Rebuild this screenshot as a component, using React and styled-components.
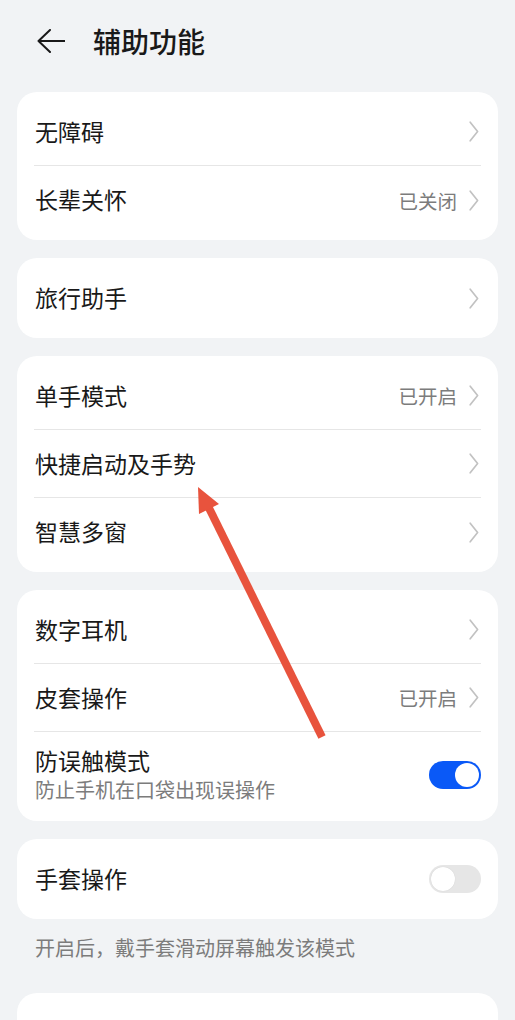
import React from "react";
import styled, { createGlobalStyle } from "styled-components";

const GlobalStyle = createGlobalStyle`
  * { box-sizing: border-box; }
  body {
    margin: 0;
    background: #f1f3f5;
    font-family: "Noto Sans CJK SC", "Noto Sans", sans-serif;
    color: #191919;
  }
`;

const Page = styled.div`
  position: relative;
  width: 515px;
  min-height: 1020px;
  overflow: hidden;
`;

const Header = styled.header`
  height: 82px;
  display: flex;
  align-items: center;
  gap: 28px;
  padding-left: 37px;
`;

const Title = styled.h1`
  margin: 0;
  font-size: 28px;
  font-weight: 500;
  line-height: 1;
  color: #191919;
`;

const List = styled.main`
  padding: 10px 17px 0;
  display: flex;
  flex-direction: column;
  gap: 18px;
`;

const Group = styled.div`
  display: flex;
  flex-direction: column;
`;

const Card = styled.section`
  background: #fff;
  border-radius: 20px;
  padding: 6px 17px;
  min-height: ${(p) => (p.$tall ? "80px" : "auto")};
`;

const Row = styled.div`
  min-height: ${(p) => (p.$double ? "83px" : "68px")};
  padding: ${(p) => (p.$double ? "13px 0 10px" : "0")};
  display: flex;
  align-items: center;
  justify-content: space-between;
  border-bottom: 1px solid #e6e6e6;
  &:last-child { border-bottom: none; }
`;

const Texts = styled.div`
  display: flex;
  flex-direction: column;
`;

const Label = styled.span`
  font-size: 23px;
  line-height: 32px;
  padding-left: 1px;
  margin-top: -2px;
`;

const Sub = styled.span`
  font-size: 20px;
  line-height: 28px;
  color: #7c7c7c;
  padding-left: 1px;
`;

const Right = styled.div`
  display: flex;
  align-items: center;
  gap: 12px;
  padding-right: 2px;
`;

const Value = styled.span`
  font-size: 19.5px;
  color: #7c7c7c;
`;

const Switch = styled.div`
  width: 52px;
  height: 28px;
  border-radius: 14px;
  padding: 2px;
  background: ${(p) => (p.$on ? "#0a59f7" : "#e6e6e6")};
  display: flex;
  justify-content: ${(p) => (p.$on ? "flex-end" : "flex-start")};
  &::after {
    content: "";
    width: 24px;
    height: 24px;
    border-radius: 50%;
    background: #fff;
    box-shadow: ${(p) => (p.$on ? "none" : "0 0 1px rgba(0,0,0,0.15)")};
  }
`;

const Note = styled.p`
  margin: 16px 0 14px;
  padding-left: 18px;
  font-size: 20px;
  line-height: 26px;
  color: #7c7c7c;
`;

const Overlay = styled.svg`
  position: absolute;
  left: 0;
  top: 0;
  pointer-events: none;
`;

const BackIcon = () => (
  <svg width="28" height="24" viewBox="0 0 28 24" fill="none">
    <path d="M28 12H1.5M13 1L1.5 12L13 23" stroke="#191919" strokeWidth="2" strokeLinecap="round" strokeLinejoin="round" />
  </svg>
);

const Chevron = () => (
  <svg width="10" height="21" viewBox="0 0 10 21" fill="none">
    <path d="M1.2 1.2L8.6 10.5L1.2 19.8" stroke="#c2c2c2" strokeWidth="1.7" strokeLinecap="round" strokeLinejoin="round" />
  </svg>
);

const Item = ({ label, value }) => (
  <Row>
    <Label>{label}</Label>
    <Right>
      {value && <Value>{value}</Value>}
      <Chevron />
    </Right>
  </Row>
);

export default function App() {
  return (
    <Page>
      <GlobalStyle />
      <Header>
        <BackIcon />
        <Title>辅助功能</Title>
      </Header>
      <List>
        <Card>
          <Item label="无障碍" />
          <Item label="长辈关怀" value="已关闭" />
        </Card>
        <Card>
          <Item label="旅行助手" />
        </Card>
        <Card>
          <Item label="单手模式" value="已开启" />
          <Item label="快捷启动及手势" />
          <Item label="智慧多窗" />
        </Card>
        <Card>
          <Item label="数字耳机" />
          <Item label="皮套操作" value="已开启" />
          <Row $double>
            <Texts>
              <Label>防误触模式</Label>
              <Sub>防止手机在口袋出现误操作</Sub>
            </Texts>
            <Switch $on />
          </Row>
        </Card>
        <Group>
          <Card>
            <Row>
              <Label>手套操作</Label>
              <Switch />
            </Row>
          </Card>
          <Note>开启后，戴手套滑动屏幕触发该模式</Note>
        </Group>
        <Card $tall />
      </List>
      <Overlay width="515" height="1020" viewBox="0 0 515 1020">
        <line x1="322" y1="737" x2="209" y2="508" stroke="#e8533d" strokeWidth="8" />
        <polygon points="198,487 219,504 199,514" fill="#e8533d" />
      </Overlay>
    </Page>
  );
}
